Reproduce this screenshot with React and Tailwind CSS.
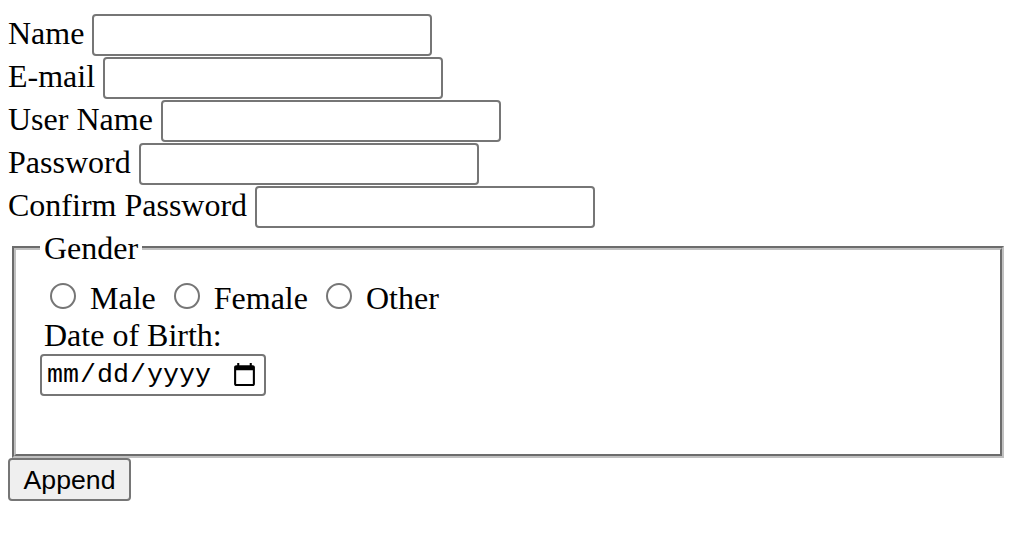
import React from "react";

const fields = [
  { label: "Name", id: "name", type: "text" },
  { label: "E-mail", id: "email", type: "email" },
  { label: "User Name", id: "username", type: "text" },
  { label: "Password", id: "password", type: "password" },
  { label: "Confirm Password", id: "confirm", type: "password" },
];

const Radio = () => (
  <span className="inline-block w-[26px] h-[26px] ml-[10px] mr-[6px] mt-[6px] rounded-full border-2 border-[#767676] bg-white" />
);

const App = () => {
  return (
    <div className="min-h-screen bg-white text-black font-['Liberation_Serif',serif] text-[32px]">
      <form className="w-[1000px] ml-[8px] pt-[14px]" onSubmit={(e) => e.preventDefault()}>
        {/* Account fields */}
        {fields.map((f) => (
          <div key={f.id} className="flex items-start gap-[8px] h-[43px]">
            <label htmlFor={f.id} className="leading-[37px] mt-[1px] whitespace-nowrap">
              {f.label}
            </label>
            <input
              id={f.id}
              type={f.type}
              className="w-[340px] h-[42px] border-2 border-[#767676] rounded-[4px] bg-white px-[4px] text-[26.67px] font-['Liberation_Sans',sans-serif] outline-none"
            />
          </div>
        ))}

        {/* Gender + birth date */}
        <fieldset className="mx-[4px] [border:4px_groove_#c0c0c0] px-[24px] pt-[10px] pb-[58px]">
          <legend className="px-[4px] leading-[38px]">Gender</legend>
          <div className="leading-[normal]">
            <Radio /> Male <Radio /> Female <Radio /> Other
          </div>
          <div className="leading-[normal] ml-[4px]">Date of Birth:</div>
          <input
            type="date"
            className="block w-[226px] h-[42px] border-2 border-[#767676] rounded-[4px] bg-white px-[4px] text-[26.67px] font-['Liberation_Mono',monospace] outline-none"
          />
        </fieldset>

        <button
          type="submit"
          className="block w-[123px] h-[43px] border-2 border-[#767676] rounded-[4px] bg-[#efefef] text-center text-[26.67px] font-['Liberation_Sans',Arial,sans-serif]"
        >
          Append
        </button>
      </form>
    </div>
  );
};

export default App;
